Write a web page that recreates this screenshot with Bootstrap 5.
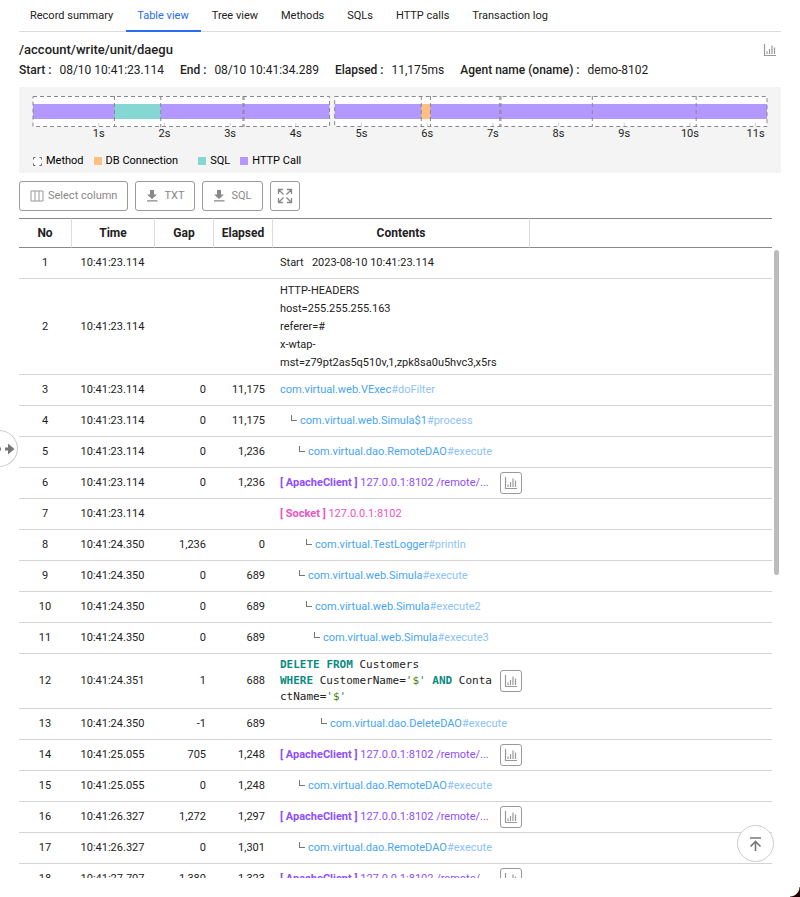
<!DOCTYPE html>
<html lang="en">
<head>
<meta charset="utf-8">
<meta name="viewport" content="width=device-width, initial-scale=1">
<title>Transaction – Table view</title>
<link href="https://cdn.jsdelivr.net/npm/bootstrap@5.3.0/dist/css/bootstrap.min.css" rel="stylesheet">
<style>
  body { font-family: Roboto, "Liberation Sans", sans-serif; font-size: 11px; line-height: 18px; color: #222; background: #fff; }
  .page { height: 100vh; padding: 0 19px 19px; }
  .tabs { border-bottom: 1px solid #ddd; font-size: 11px; }
  .tabs .nav-link { padding: 7px 12px 5px 11px; color: #222; border-radius: 0; border-bottom: 2px solid transparent; margin-bottom: -1px; }
  .tabs .nav-link.active { color: #296cf2; border-bottom-color: #296cf2; }
  .tabs .nav-item:first-child .nav-link { padding-right: 13px; }
  .path { font-size: 13px; line-height: 20px; font-weight: 500; }
  .meta { font-size: 12px; line-height: 20px; gap: 16px; padding-bottom: 7px; }
  .meta dt { font-weight: 500; margin-right: 8px; }
  .meta dd { margin: 0; }
  .plain { border: 0; background: none; padding: 0; line-height: 0; color: #999; }
  .timeline { background: #f4f4f4; padding: 9px 14px 3px; margin-bottom: 8px; }
  .timeline text { font-size: 11px; fill: #222; text-anchor: middle; }
  .dash { stroke: #888; stroke-dasharray: 4 3; fill: none; }
  .tick { stroke: #ccc; }
  .http { fill: #b399ff; } .sql { fill: #84d7d2; } .dbc { fill: #fdc081; }
  .legend { font-size: 11px; gap: 10px; color: #000; }
  .legend .wide { margin-right: 10px; }
  .tools { gap: 7px; margin-bottom: 7px; }
  .tool { height: 30px; border: 1px solid #999; border-radius: 3px; color: #888; font-size: 11px; line-height: 18px; padding: 0 10px; gap: 4px; background: #fff; }
  .tool-save { gap: 6px; }
  .tool-square { padding: 0 6px; }
  .grid-box { flex: 1 1 0; min-height: 0; overflow: hidden; }
  .grid { table-layout: fixed; border-collapse: separate; border-spacing: 0; width: 100%; }
  .grid th { height: 30px; padding: 0; border-top: 1px solid #888; border-bottom: 1px solid #888; font-size: 12px; font-weight: 700; text-align: center; position: sticky; top: 0; background: #fff; }
  .grid th + th { border-left: 1px solid #ddd; }
  .grid td { height: 31px; padding: 0 7px; border-bottom: 1px solid #d4d4d4; vertical-align: middle; text-align: right; }
  .grid td:nth-child(1), .grid td:nth-child(2) { text-align: center; }
  .grid td:nth-child(5) { text-align: left; padding-left: 8px; }
  .c-no { width: 52px; } .c-time { width: 83px; } .c-num { width: 59px; } .c-body { width: 257px; }
  .grid .headers { padding-top: 3px; padding-bottom: 2px; }
  .grid .sqlrow { padding-top: 3px; padding-bottom: 3px; }
  .call { color: #47a4f5; text-decoration: none; }
  .call span { color: #8cc2fb; }
  .client { color: #904dff; } .socket { color: #ee53c5; }
  .client b, .socket b { font-weight: 700; }
  .clip { width: 213px; }
  .branch { width: 6px; height: 6px; border-left: 1px solid #777; border-bottom: 1px solid #777; margin: 0 3px 7px 0; }
  .d1 { padding-left: 11px; } .d2 { padding-left: 19px; } .d3 { padding-left: 26px; } .d4 { padding-left: 34px; } .d5 { padding-left: 41px; }
  .code { font-family: "DejaVu Sans Mono", monospace; font-size: 11px; line-height: 16px; width: 217px; word-break: break-all; color: #222; }
  .code b { color: #0b8a7f; } .code i { color: #3f850d; font-style: normal; }
  .chart-btn { width: 22px; height: 22px; border: 1px solid #999; border-radius: 3px; background: #fff; color: #999; padding: 0; line-height: 0; flex: none; }
  .thumb { width: 5px; height: 325px; margin: 32px 2px 0; border-radius: 3px; background: #bbb; flex: none; }
  .fab { border: 1px solid #ccc; border-radius: 50%; background: #fff; color: #777; padding: 0; width: 37px; height: 37px; line-height: 0; }
  .fab-top { right: 26px; bottom: 35px; }
  .fab-side { left: -20px; top: 430px; width: 38px; }
  .corner { right: 0; bottom: 0; width: 10px; height: 10px; background: radial-gradient(circle at 0 0, transparent 9px, #200 10px); }
</style>
<script src="https://cdn.jsdelivr.net/npm/bootstrap@5.3.0/dist/js/bootstrap.bundle.min.js"></script>
</head>
<body class="overflow-hidden">
<svg class="d-none">
  <symbol id="chart" viewBox="0 0 14 14"><path d="M1.500 1v11.500H13M4 11V8.500M6.500 11V6M9 11V2.500M11.500 11V4.500" fill="none" stroke="currentColor" stroke-width="1.200"/></symbol>
  <symbol id="down" viewBox="0 0 12 12"><path d="M4 0h4v4.500h3L6 9 1 4.500h3zM1 10.300h10.500v1.300H1z" fill="currentColor"/></symbol>
</svg>
<main class="page d-flex flex-column position-relative">
  <ul class="nav tabs">
    <li class="nav-item"><a class="nav-link" href="#">Record summary</a></li>
    <li class="nav-item"><a class="nav-link active" aria-current="page" href="#">Table view</a></li>
    <li class="nav-item"><a class="nav-link" href="#">Tree view</a></li>
    <li class="nav-item"><a class="nav-link" href="#">Methods</a></li>
    <li class="nav-item"><a class="nav-link" href="#">SQLs</a></li>
    <li class="nav-item"><a class="nav-link" href="#">HTTP calls</a></li>
    <li class="nav-item"><a class="nav-link" href="#">Transaction log</a></li>
  </ul>

  <div class="d-flex justify-content-between align-items-center mt-2 pe-1">
    <h1 class="path mb-0">/account/write/unit/daegu</h1>
    <button class="plain" type="button" aria-label="Chart"><svg width="14" height="14"><use href="#chart"/></svg></button>
  </div>
  <dl class="meta d-flex mb-0">
    <div class="d-flex"><dt>Start :</dt><dd>08/10 10:41:23.114</dd></div>
    <div class="d-flex"><dt>End :</dt><dd>08/10 10:41:34.289</dd></div>
    <div class="d-flex"><dt>Elapsed :</dt><dd>11,175ms</dd></div>
    <div class="d-flex"><dt>Agent name (oname) :</dt><dd>demo-8102</dd></div>
  </dl>

  <section class="timeline">
    <svg class="d-block overflow-visible" width="100%" height="56">
      <rect width="40.4%" height="31" fill="#fff"/><rect x="41.1%" width="58.900%" height="31" fill="#fff"/>
      <rect class="http" y="8" width="40.400%" height="15"/><rect class="http" x="41.100%" y="8" width="58.900%" height="15"/>
      <rect class="sql" x="11.100%" y="8" width="6.300%" height="15"/><rect class="dbc" x="52.900%" y="8" width="1.250%" height="15"/>
      <g class="dash">
        <rect x="0" y=".5" width="40.400%" height="30"/><rect x="41.100%" y=".5" width="58.900%" height="30"/>
        <line x1="11.100%" x2="11.100%" y1="0" y2="31"/><line x1="17.400%" x2="17.400%" y1="0" y2="31"/>
        <line x1="28.600%" x2="28.600%" y1="0" y2="31"/><line x1="28.750%" x2="28.750%" y1="0" y2="31"/>
        <line x1="52.900%" x2="52.900%" y1="0" y2="31"/><line x1="54.150%" x2="54.150%" y1="0" y2="31"/>
        <line x1="63.600%" x2="63.600%" y1="0" y2="31"/><line x1="63.750%" x2="63.750%" y1="0" y2="31"/>
        <line x1="76.200%" x2="76.200%" y1="0" y2="31"/><line x1="90.350%" x2="90.350%" y1="0" y2="31"/>
      </g>
      <g class="tick">
        <line x1="8.950%" x2="8.950%" y1="27" y2="30"/><line x1="17.900%" x2="17.900%" y1="27" y2="30"/><line x1="26.850%" x2="26.850%" y1="27" y2="30"/><line x1="35.800%" x2="35.800%" y1="27" y2="30"/><line x1="44.750%" x2="44.750%" y1="27" y2="30"/><line x1="53.700%" x2="53.700%" y1="27" y2="30"/><line x1="62.650%" x2="62.650%" y1="27" y2="30"/><line x1="71.600%" x2="71.600%" y1="27" y2="30"/><line x1="80.550%" x2="80.550%" y1="27" y2="30"/><line x1="89.500%" x2="89.500%" y1="27" y2="30"/><line x1="98.450%" x2="98.450%" y1="27" y2="30"/>
      </g>
      <text x="8.950%" y="41">1s</text><text x="17.900%" y="41">2s</text><text x="26.850%" y="41">3s</text><text x="35.800%" y="41">4s</text><text x="44.750%" y="41">5s</text><text x="53.700%" y="41">6s</text><text x="62.650%" y="41">7s</text><text x="71.600%" y="41">8s</text><text x="80.550%" y="41">9s</text><text x="89.500%" y="41">10s</text><text x="98.450%" y="41">11s</text>
    </svg>
    <div class="legend d-flex">
      <span class="d-flex align-items-center gap-1"><svg width="9" height="9"><rect x=".5" y=".5" width="8" height="8" fill="#fff" stroke="#666" stroke-dasharray="2 4 4 4 4 4 4 4 2"/></svg>Method</span>
      <span class="wide d-flex align-items-center gap-1"><svg width="8" height="8"><rect class="dbc" width="8" height="8"/></svg>DB Connection</span>
      <span class="d-flex align-items-center gap-1"><svg width="8" height="8"><rect class="sql" width="8" height="8"/></svg>SQL</span>
      <span class="d-flex align-items-center gap-1"><svg width="8" height="8"><rect class="http" width="8" height="8"/></svg>HTTP Call</span>
    </div>
  </section>

  <div class="tools d-flex">
    <button type="button" class="tool d-flex align-items-center"><svg width="14" height="12"><path d="M1 1h12v10H1zM5 1v10M9 1v10" fill="none" stroke="#999"/></svg>Select column</button>
    <button type="button" class="tool tool-save d-flex align-items-center"><svg width="12" height="12"><use href="#down"/></svg>TXT</button>
    <button type="button" class="tool tool-save d-flex align-items-center"><svg width="12" height="12"><use href="#down"/></svg>SQL</button>
    <button type="button" class="tool tool-square d-flex align-items-center" aria-label="Expand"><svg width="16" height="16"><path d="M1.500 6V1.500H6M10 1.500h4.500V6M14.500 10v4.500H10M6 14.500H1.500V10M2 2l4.500 4.500M14 2L9.500 6.500M14 14L9.500 9.500M2 14l4.500-4.500" fill="none" stroke="#888" stroke-width="1.300"/></svg></button>
  </div>

  <div class="grid-box d-flex align-items-start">
    <table class="grid">
      <colgroup><col class="c-no"><col class="c-time"><col class="c-num"><col class="c-num"><col class="c-body"><col></colgroup>
      <thead><tr><th>No</th><th>Time</th><th>Gap</th><th>Elapsed</th><th>Contents</th><th></th></tr></thead>
      <tbody>
        <tr><td>1</td><td>10:41:23.114</td><td></td><td></td><td>Start &nbsp;&nbsp;2023-08-10 10:41:23.114</td><td></td></tr>
        <tr><td>2</td><td>10:41:23.114</td><td></td><td></td><td class="headers">HTTP-HEADERS<br>host=255.255.255.163<br>referer=#<br>x-wtap-<br>mst=z79pt2as5q510v,1,zpk8sa0u5hvc3,x5rs</td><td></td></tr>
        <tr><td>3</td><td>10:41:23.114</td><td>0</td><td>11,175</td><td><a class="call" href="#">com.virtual.web.VExec<span>#doFilter</span></a></td><td></td></tr>
        <tr><td>4</td><td>10:41:23.114</td><td>0</td><td>11,175</td><td><div class="d-flex align-items-center d1"><span class="branch"></span><a class="call" href="#">com.virtual.web.Simula$1<span>#process</span></a></div></td><td></td></tr>
        <tr><td>5</td><td>10:41:23.114</td><td>0</td><td>1,236</td><td><div class="d-flex align-items-center d2"><span class="branch"></span><a class="call" href="#">com.virtual.dao.RemoteDAO<span>#execute</span></a></div></td><td></td></tr>
        <tr><td>6</td><td>10:41:23.114</td><td>0</td><td>1,236</td><td><div class="d-flex align-items-center justify-content-between"><span class="client clip"><b>[ ApacheClient ]</b> 127.0.0.1:8102 /remote/...</span><button class="chart-btn" type="button" aria-label="Chart"><svg width="14" height="14"><use href="#chart"/></svg></button></div></td><td></td></tr>
        <tr><td>7</td><td>10:41:23.114</td><td></td><td></td><td class="socket"><b>[ Socket ]</b> 127.0.0.1:8102</td><td></td></tr>
        <tr><td>8</td><td>10:41:24.350</td><td>1,236</td><td>0</td><td><div class="d-flex align-items-center d3"><span class="branch"></span><a class="call" href="#">com.virtual.TestLogger<span>#println</span></a></div></td><td></td></tr>
        <tr><td>9</td><td>10:41:24.350</td><td>0</td><td>689</td><td><div class="d-flex align-items-center d2"><span class="branch"></span><a class="call" href="#">com.virtual.web.Simula<span>#execute</span></a></div></td><td></td></tr>
        <tr><td>10</td><td>10:41:24.350</td><td>0</td><td>689</td><td><div class="d-flex align-items-center d3"><span class="branch"></span><a class="call" href="#">com.virtual.web.Simula<span>#execute2</span></a></div></td><td></td></tr>
        <tr><td>11</td><td>10:41:24.350</td><td>0</td><td>689</td><td><div class="d-flex align-items-center d4"><span class="branch"></span><a class="call" href="#">com.virtual.web.Simula<span>#execute3</span></a></div></td><td></td></tr>
        <tr><td>12</td><td>10:41:24.351</td><td>1</td><td>688</td><td class="sqlrow"><div class="d-flex align-items-center justify-content-between"><code class="code"><b>DELETE</b> <b>FROM</b> Customers<br><b>WHERE</b> CustomerName=<i>'$'</i> <b>AND</b> ContactName=<i>'$'</i></code><button class="chart-btn" type="button" aria-label="Chart"><svg width="14" height="14"><use href="#chart"/></svg></button></div></td><td></td></tr>
        <tr><td>13</td><td>10:41:24.350</td><td>-1</td><td>689</td><td><div class="d-flex align-items-center d5"><span class="branch"></span><a class="call" href="#">com.virtual.dao.DeleteDAO<span>#execute</span></a></div></td><td></td></tr>
        <tr><td>14</td><td>10:41:25.055</td><td>705</td><td>1,248</td><td><div class="d-flex align-items-center justify-content-between"><span class="client clip"><b>[ ApacheClient ]</b> 127.0.0.1:8102 /remote/...</span><button class="chart-btn" type="button" aria-label="Chart"><svg width="14" height="14"><use href="#chart"/></svg></button></div></td><td></td></tr>
        <tr><td>15</td><td>10:41:25.055</td><td>0</td><td>1,248</td><td><div class="d-flex align-items-center d2"><span class="branch"></span><a class="call" href="#">com.virtual.dao.RemoteDAO<span>#execute</span></a></div></td><td></td></tr>
        <tr><td>16</td><td>10:41:26.327</td><td>1,272</td><td>1,297</td><td><div class="d-flex align-items-center justify-content-between"><span class="client clip"><b>[ ApacheClient ]</b> 127.0.0.1:8102 /remote/...</span><button class="chart-btn" type="button" aria-label="Chart"><svg width="14" height="14"><use href="#chart"/></svg></button></div></td><td></td></tr>
        <tr><td>17</td><td>10:41:26.327</td><td>0</td><td>1,301</td><td><div class="d-flex align-items-center d2"><span class="branch"></span><a class="call" href="#">com.virtual.dao.RemoteDAO<span>#execute</span></a></div></td><td></td></tr>
        <tr><td>18</td><td>10:41:27.707</td><td>1,380</td><td>1,323</td><td><div class="d-flex align-items-center justify-content-between"><span class="client clip"><b>[ ApacheClient ]</b> 127.0.0.1:8102 /remote/...</span><button class="chart-btn" type="button" aria-label="Chart"><svg width="14" height="14"><use href="#chart"/></svg></button></div></td><td></td></tr>
      </tbody>
    </table>
    <div class="thumb"></div>
  </div>

  <button type="button" class="fab fab-side position-absolute" aria-label="Open panel"><svg width="36" height="36"><path d="M17 16.500h3v3h-3zM24 16.500h3v-4l6.500 5.500-6.500 5.500v-4h-3z" fill="#777"/></svg></button>
  <button type="button" class="fab fab-top position-absolute" aria-label="Scroll to top"><svg width="35" height="35"><path d="M12 12h11M17.500 25v-9M12.500 20.500l5-5 5 5" fill="none" stroke="#777" stroke-width="1.600"/></svg></button>
  <div class="corner position-absolute"></div>
</main>
</body>
</html>
